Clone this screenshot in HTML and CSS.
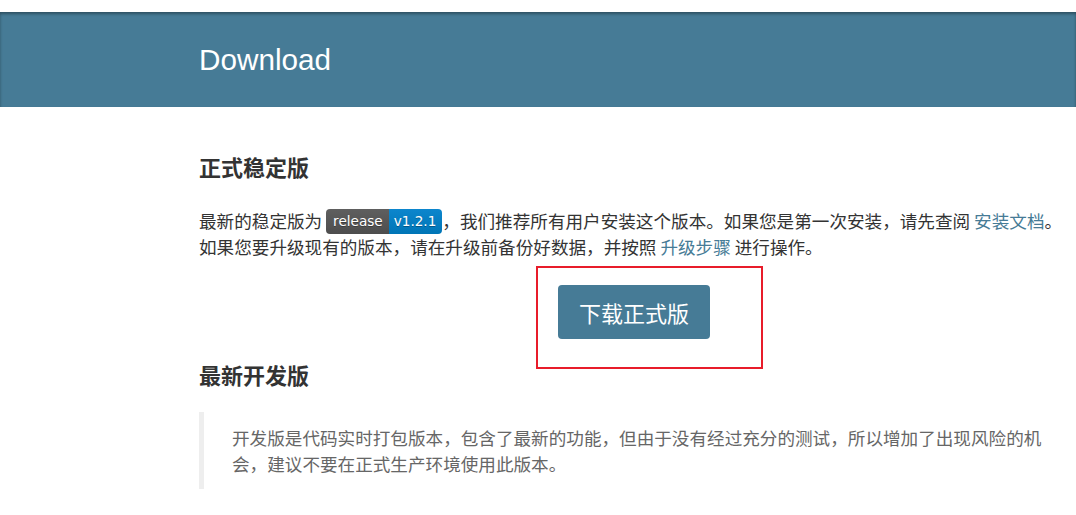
FILE: index.html
```html
<!DOCTYPE html>
<html lang="zh-CN">
<head>
<meta charset="utf-8">
<title>Download</title>
<link rel="stylesheet" href="styles.css">
</head>
<body>
<header class="banner">
  <h1 class="banner-title">Download</h1>
</header>
<main class="content">
  <h2 class="section-title">正式稳定版</h2>
  <p class="text">最新的稳定版为 <span class="badge"><span class="badge-label">release</span><span class="badge-value">v1.2.1</span></span>，我们推荐所有用户安装这个版本。如果您是第一次安装，请先查阅 <a class="link" href="#">安装文档</a>。如果您要升级现有的版本，请在升级前备份好数据，并按照 <a class="link" href="#">升级步骤</a> 进行操作。</p>
  <div class="action">
    <span class="action-wrap">
      <a class="btn" href="#">下载正式版</a>
      <span class="highlight"></span>
    </span>
  </div>
  <h2 class="section-title section-title-2">最新开发版</h2>
  <blockquote class="note">开发版是代码实时打包版本，包含了最新的功能，但由于没有经过充分的测试，所以增加了出现风险的机会，建议不要在正式生产环境使用此版本。</blockquote>
</main>
</body>
</html>
```

FILE: styles.css
```css
html, body {
  margin: 0;
  padding: 0;
  background: #fff;
}
body {
  padding-top: 12px;
  font-family: "Liberation Sans", "Noto Sans CJK SC", sans-serif;
  color: #333;
}
.banner {
  height: 95px;
  background: #467b96;
  box-shadow: inset 0 2px 3px rgba(0, 0, 0, 0.35);
  display: flex;
  align-items: center;
  padding-left: 199px;
}
.banner-title {
  margin: 0;
  font-family: "Liberation Sans", Arial, sans-serif;
  font-weight: normal;
  font-size: 29.7px;
  line-height: 1;
  color: #fff;
}
.content {
  width: 870px;
  margin-left: 199px;
  padding-top: 44px;
}
.section-title {
  margin: 0;
  font-family: "Noto Sans CJK SC", sans-serif;
  font-size: 22px;
  line-height: 30px;
  font-weight: bold;
  color: #333;
}
.text {
  margin: 27px 0 0;
  font-family: "Noto Sans CJK SC", sans-serif;
  font-size: 17.6px;
  line-height: 26px;
  color: #333;
}
.link {
  color: #467b96;
  text-decoration: none;
}
.badge {
  display: inline-flex;
  vertical-align: top;
  height: 25px;
  margin-top: 1px;
  border-radius: 4px;
  overflow: hidden;
  font-family: "DejaVu Sans", Verdana, sans-serif;
  font-size: 13.6px;
  line-height: 25px;
  color: #fff;
  text-shadow: 0 1px 0 rgba(1, 1, 1, 0.3);
}
.badge-label {
  background: linear-gradient(#5f5f5f, #4d4d4d);
  padding: 0 6px 0 7px;
}
.badge-value {
  background: linear-gradient(#0c86cd, #0075b6);
  padding: 0 6px 0 5px;
}
.action {
  margin-top: 25px;
  text-align: center;
}
.action-wrap {
  position: relative;
  display: inline-block;
}
.btn {
  display: block;
  padding: 10px 21px;
  background: #467b96;
  color: #fff;
  border-radius: 4px;
  font-family: "Noto Sans CJK SC", sans-serif;
  font-size: 22px;
  line-height: 34px;
  text-decoration: none;
}
.highlight {
  position: absolute;
  left: -22px;
  top: -19px;
  width: 227px;
  height: 103px;
  box-sizing: border-box;
  border: 2px solid #e81c2a;
}
.section-title-2 {
  margin-top: 20px;
}
.note {
  margin: 23px 0 0;
  padding: 13px 20px 12px 28px;
  border-left: 5px solid #eee;
  font-family: "Noto Sans CJK SC", sans-serif;
  font-size: 17.6px;
  line-height: 26px;
  color: #666;
}
```
